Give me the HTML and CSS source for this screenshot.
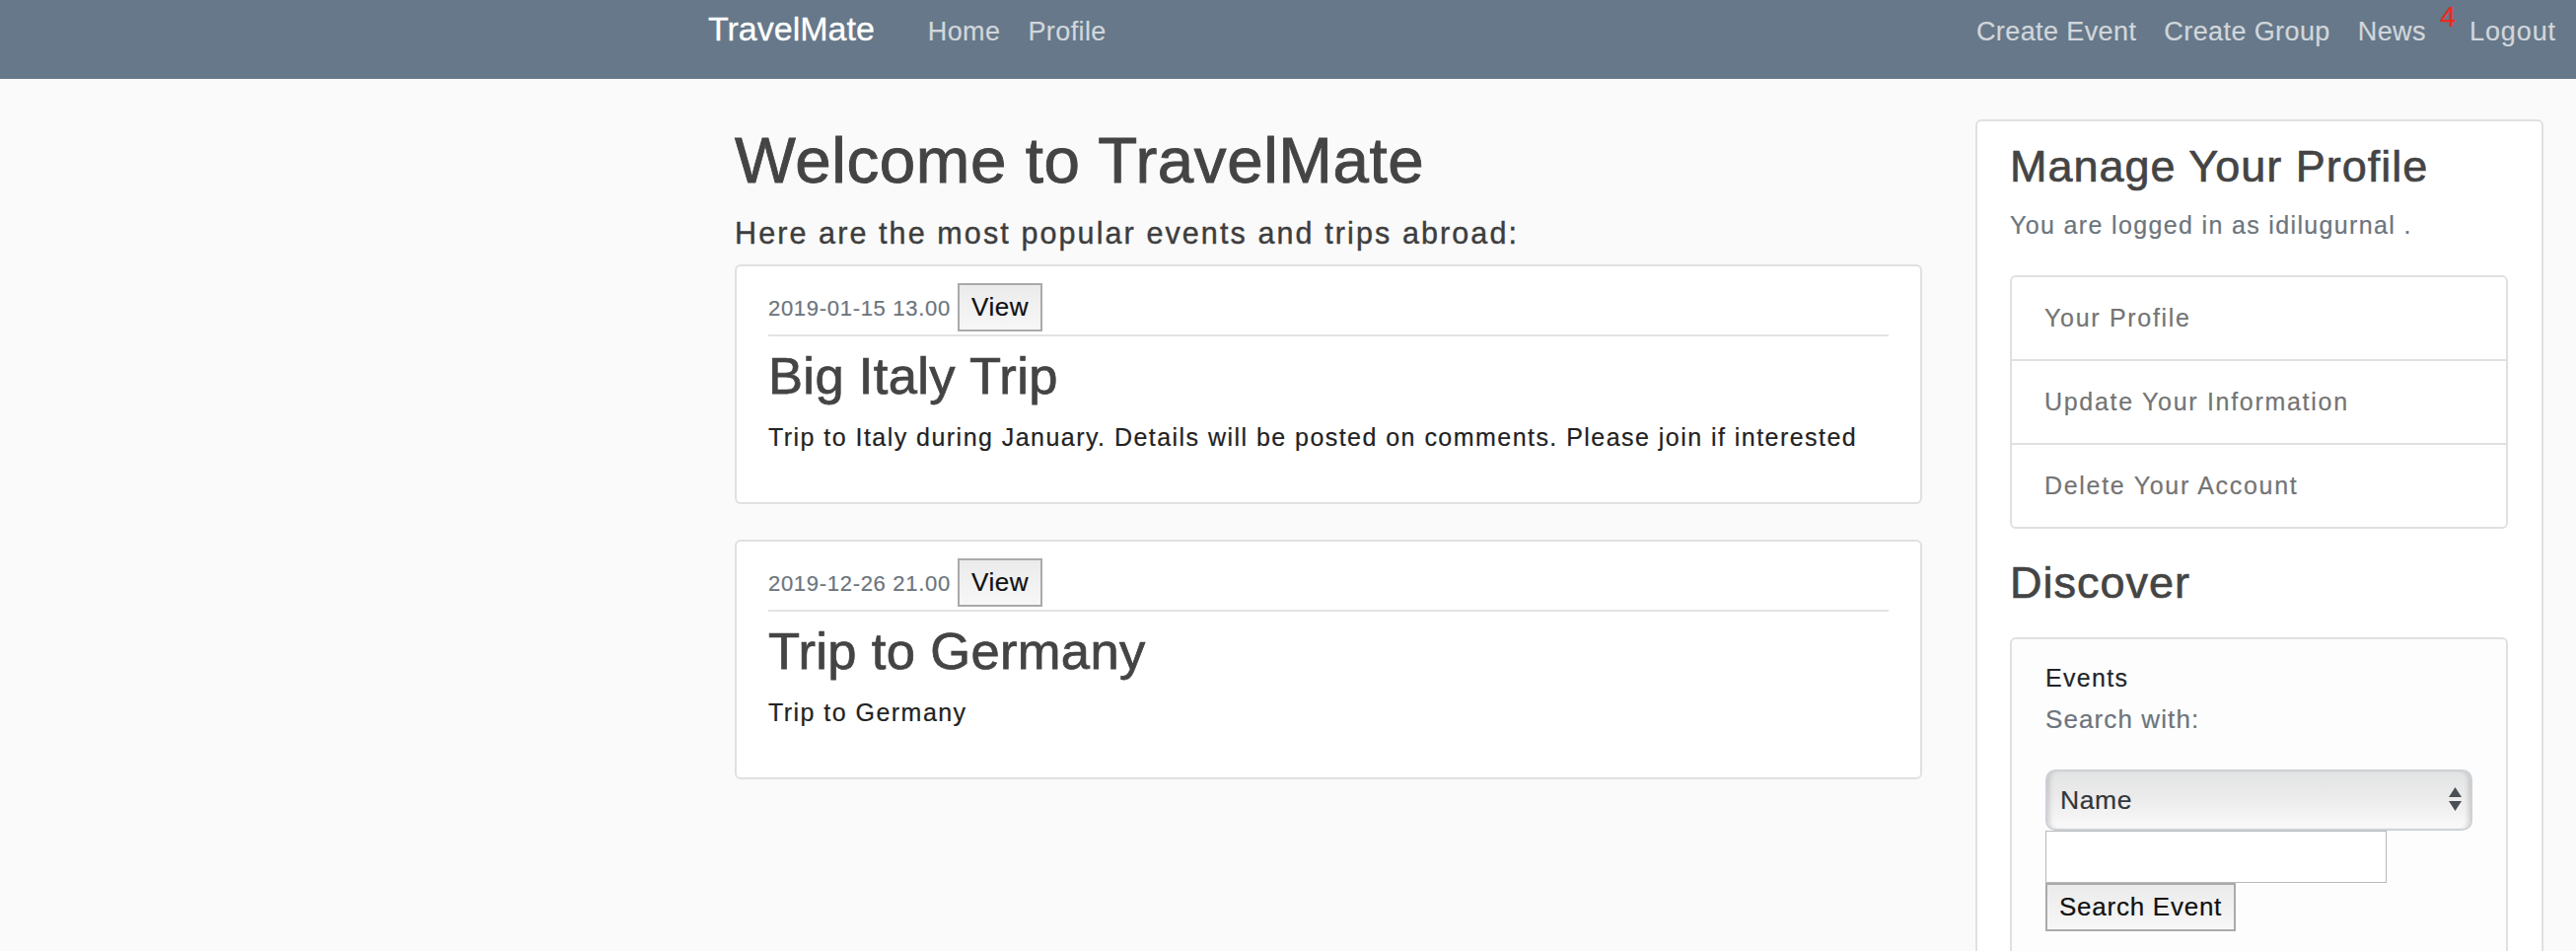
FILE: index.html
```html
<!DOCTYPE html>
<html lang="en">
<head>
<meta charset="utf-8">
<title>TravelMate</title>
<link rel="stylesheet" href="styles.css">
</head>
<body>
<nav class="navbar">
  <a class="brand" href="#">TravelMate</a>
  <ul class="nav">
    <li><a class="nav-link" href="#">Home</a></li>
    <li><a class="nav-link" href="#">Profile</a></li>
  </ul>
  <ul class="nav nav-right">
    <li><a class="nav-link" href="#">Create Event</a></li>
    <li><a class="nav-link" href="#">Create Group</a></li>
    <li><a class="nav-link" href="#">News</a></li>
    <li><sup class="badge">4</sup></li>
    <li><a class="nav-link nav-last" href="#">Logout</a></li>
  </ul>
</nav>

<main class="page">
  <section class="content">
    <h1 class="welcome">Welcome to TravelMate</h1>
    <h4 class="subtitle">Here are the most popular events and trips abroad:</h4>

    <article class="event-card">
      <div class="event-meta">
        <span class="event-date">2019-01-15 13.00</span>
        <button class="btn" type="button">View</button>
      </div>
      <div class="divider"></div>
      <h2 class="event-title">Big Italy Trip</h2>
      <p class="event-desc">Trip to Italy during January. Details will be posted on comments. Please join if interested</p>
    </article>

    <article class="event-card">
      <div class="event-meta">
        <span class="event-date">2019-12-26 21.00</span>
        <button class="btn" type="button">View</button>
      </div>
      <div class="divider"></div>
      <h2 class="event-title">Trip to Germany</h2>
      <p class="event-desc">Trip to Germany</p>
    </article>
  </section>

  <aside class="sidebar">
    <div class="profile-card">
      <h3 class="side-heading">Manage Your Profile</h3>
      <p class="login-note">You are logged in as idilugurnal .</p>
      <ul class="list-group">
        <li class="list-item">Your Profile</li>
        <li class="list-item">Update Your Information</li>
        <li class="list-item">Delete Your Account</li>
      </ul>

      <h3 class="side-heading discover-heading">Discover</h3>
      <form class="search-card">
        <div class="search-title">Events</div>
        <label class="search-label" for="search-by">Search with:</label>
        <div class="select-wrap">
          <select class="select" id="search-by">
            <option>Name</option>
          </select>
          <svg class="select-arrows" viewBox="0 0 13 24" aria-hidden="true">
            <polygon points="6.5,0 13,10 0,10" fill="#4a4f55"/>
            <polygon points="0,14 13,14 6.5,24" fill="#4a4f55"/>
          </svg>
        </div>
        <input class="search-input" type="text">
        <button class="btn btn-search" type="button">Search Event</button>
      </form>
    </div>
  </aside>
</main>
</body>
</html>
```

FILE: styles.css
```css
* {
  box-sizing: border-box;
}

html,
body {
  margin: 0;
  height: 100%;
  overflow: hidden;
}

body {
  background: #fafafa;
  font-family: "Liberation Sans", Arial, sans-serif;
  color: #212529;
  -webkit-text-stroke: 0.2px currentColor;
}

/* ---------- navbar ---------- */
.navbar {
  display: flex;
  align-items: baseline;
  height: 80px;
  padding: 10px 6px 0 718px;
  background: #667889;
}

.brand {
  margin-right: 40px;
  font-size: 34px;
  line-height: 1.15;
  color: #fff;
  text-decoration: none;
  -webkit-text-stroke: 0.3px #fff;
}

.nav {
  display: flex;
  align-items: baseline;
  margin: 0;
  padding: 0;
  list-style: none;
}

.nav-right {
  margin-left: auto;
}

.nav-link {
  display: block;
  padding: 0 14px;
  font-size: 27px;
  line-height: 1.15;
  letter-spacing: 0.4px;
  color: #d1d6db;
  text-decoration: none;
}

.nav-last {
  letter-spacing: 0.9px;
}

.badge {
  position: relative;
  top: -14.5px;
  vertical-align: baseline;
  font-size: 29px;
  line-height: 1.15;
  color: #ec2a1e;
}

/* ---------- page layout ---------- */
.page {
  display: grid;
  grid-template-columns: 1204px 576px;
  column-gap: 54px;
  align-items: start;
  padding: 41px 0 0 745px;
}

.welcome {
  margin: 4px 0 0;
  font-size: 65.5px;
  line-height: 1.15;
  font-weight: 400;
  letter-spacing: 0.6px;
  color: #444;
  -webkit-text-stroke: 0.9px #444;
}

.subtitle {
  margin: 18.7px 0 0;
  font-size: 30.5px;
  line-height: 1.15;
  font-weight: 400;
  letter-spacing: 2.1px;
  color: #3d3d3d;
  -webkit-text-stroke: 0.4px #3d3d3d;
}

/* ---------- event cards ---------- */
.event-card {
  margin-top: 14.2px;
  padding: 17px 32px 47px;
  background: #fff;
  border: 2px solid #e0e0e0;
  border-radius: 6px;
}

.event-card + .event-card {
  margin-top: 36px;
}

.event-meta {
  display: flex;
  align-items: baseline;
  gap: 7px;
}

.event-date {
  font-size: 22px;
  letter-spacing: 0.7px;
  color: #6c757d;
}

.btn {
  margin: 0;
  padding: 0 12px;
  font-family: inherit;
  font-size: 26px;
  line-height: 45px;
  letter-spacing: 0.6px;
  color: #111;
  background: linear-gradient(#ebebeb, #f7f7f7);
  border: 2px solid #aaa;
  border-radius: 0;
}

.btn-search {
  letter-spacing: 0.75px;
}

.divider {
  margin-top: 2.4px;
  border-top: 2px solid #e3e3e3;
}

.event-title {
  margin: 10.2px 0 0;
  font-size: 52.5px;
  line-height: 1.15;
  font-weight: 400;
  letter-spacing: 0.35px;
  color: #444;
  -webkit-text-stroke: 0.75px #444;
}

.event-desc {
  margin: 13.6px 0 0;
  font-size: 25px;
  line-height: 1.5;
  letter-spacing: 1.46px;
  color: #222;
}

/* ---------- sidebar ---------- */
.profile-card {
  padding: 19.5px 34px 60px 33px;
  background: #fff;
  border: 2px solid #e0e0e0;
  border-radius: 6px;
}

.side-heading {
  margin: 0;
  font-size: 45px;
  line-height: 1.15;
  font-weight: 400;
  letter-spacing: 1px;
  color: #444;
  -webkit-text-stroke: 0.65px #444;
}

.login-note {
  margin: 16px 0 0;
  font-size: 25px;
  line-height: 1.5;
  letter-spacing: 1.35px;
  color: #6c757d;
}

.list-group {
  margin: 31px 0 0;
  padding: 0;
  list-style: none;
  border: 2px solid #e0e0e0;
  border-radius: 6px;
}

.list-item {
  padding: 22.75px 33px;
  font-size: 25px;
  line-height: 1.5;
  letter-spacing: 1.7px;
  color: #747474;
}

.list-item + .list-item {
  border-top: 2px solid #e0e0e0;
}

.discover-heading {
  margin-top: 29.5px;
}

.search-card {
  margin: 29.3px 0 0;
  padding: 20.6px 33px 60px 34px;
  background: #fdfdfd;
  border: 2px solid #e0e0e0;
  border-radius: 6px;
}

.search-title {
  font-size: 25px;
  line-height: 1.5;
  letter-spacing: 1.3px;
  color: #212529;
}

.search-label {
  display: block;
  margin-top: 3.7px;
  font-size: 26px;
  line-height: 1.5;
  letter-spacing: 1.1px;
  color: #6c757d;
}

.select-wrap {
  position: relative;
  width: 433px;
  margin-top: 30.5px;
}

.select {
  -webkit-appearance: none;
  appearance: none;
  display: block;
  width: 433px;
  height: 62px;
  margin: 0;
  padding: 0 40px 0 13px;
  font-family: inherit;
  font-size: 26.5px;
  letter-spacing: 0.6px;
  color: #33363a;
  background: linear-gradient(#e3e4e5 0%, #ebebeb 45%, #fafafa 100%);
  border: 2px solid #cdd2d7;
  border-radius: 10px;
  box-shadow: inset 5px 0 5px -3px rgba(0, 0, 0, 0.16), inset -5px 0 5px -3px rgba(0, 0, 0, 0.16);
}

.select-arrows {
  position: absolute;
  top: 18px;
  right: 11px;
  width: 13px;
  height: 24px;
  pointer-events: none;
}

.search-input {
  display: block;
  width: 346px;
  height: 53px;
  margin: 0;
  padding: 0 8px;
  font-family: inherit;
  font-size: 26px;
  background: #fff;
  border: 1px solid #b9b9b9;
  border-radius: 0;
}
```
